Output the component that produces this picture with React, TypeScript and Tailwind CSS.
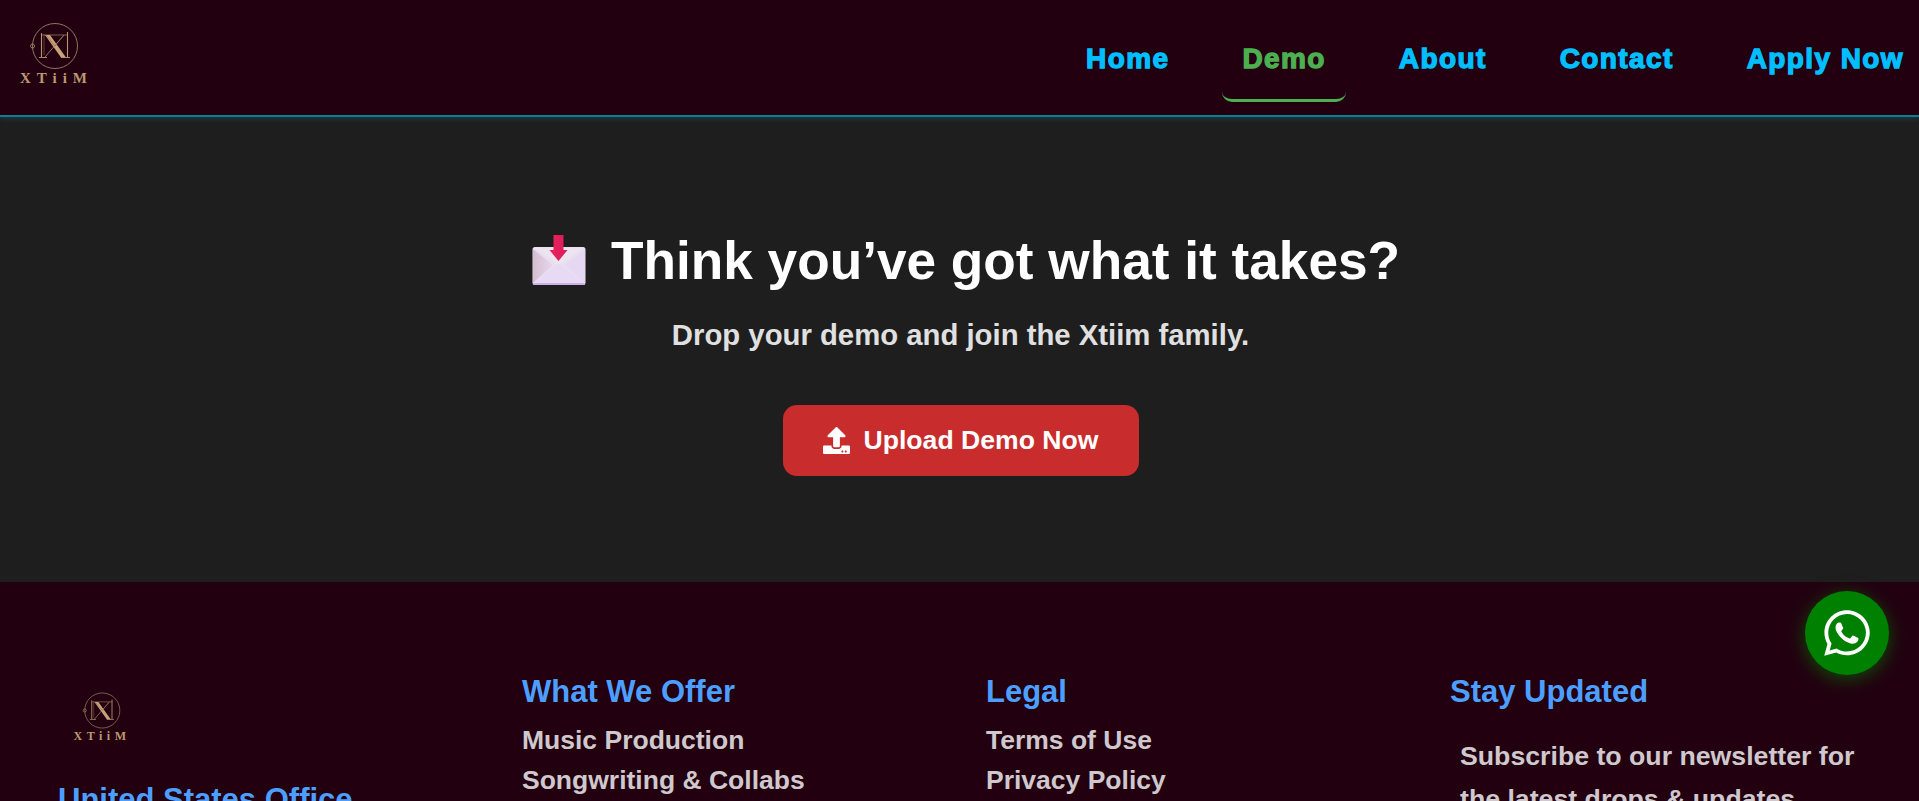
import { FaUpload, FaWhatsapp } from "react-icons/fa";

const navLinks = ["Home", "Demo", "About", "Contact", "Apply Now"];
const offers = ["Music Production", "Songwriting & Collabs"];
const legal = ["Terms of Use", "Privacy Policy"];

function Emblem({ className }: { className: string }) {
  return (
    <svg viewBox="0 0 50 50" className={className} fill="none">
      <circle cx="26" cy="25" r="22.5" stroke="#a08068" strokeWidth="0.9" />
      <circle cx="3.5" cy="25" r="2" stroke="#a08068" strokeWidth="0.9" />
      <path d="M13 14h26" stroke="#a88a6c" strokeWidth="0.7" />
      <path d="M12.5 12v24M38.5 11v25" stroke="#b8946e" strokeWidth="1.1" />
      <path d="M15 13v21" stroke="#8a6a4c" strokeWidth="0.6" />
      <path d="M16 14l16 22.5h5L21 14z" fill="#c9a27a" />
      <path d="M35 14L16 36" stroke="#b8946e" strokeWidth="0.8" />
      <path d="M17 14l9 11 9-11" stroke="#8a6a4c" strokeWidth="0.6" />
      <path d="M10 36.5h8M32 36.5h9" stroke="#b8946e" strokeWidth="0.9" />
    </svg>
  );
}

function EnvelopeIcon() {
  return (
    <svg viewBox="0 0 54 52" className="h-[52px] w-[54px] shrink-0">
      <defs>
        <linearGradient id="arrow" x1="0" y1="0" x2="1" y2="0">
          <stop offset="0" stopColor="#ee2158" />
          <stop offset="1" stopColor="#d81b60" />
        </linearGradient>
        <linearGradient id="side" x1="0" y1="0" x2="1" y2="0">
          <stop offset="0" stopColor="#d6bdd0" />
          <stop offset="1" stopColor="#e6d8ec" />
        </linearGradient>
      </defs>
      <rect x="0.5" y="12" width="53" height="38" rx="2.5" fill="#e9dff0" />
      <path d="M1 14v34l20-18z" fill="url(#side)" />
      <path d="M53 14v34l-20-18z" fill="#e6d8f2" />
      <path d="M2 12.5h50L30 28q-3 2-6 0z" fill="#ece4ee" />
      <path d="M2 48l23-18q2-1 4 0l23 18z" fill="#e8daf4" />
      <rect x="1" y="48" width="52" height="2" rx="1" fill="#cbaeea" />
      <path d="M21.5 0h10v15h4L26.5 26 17.5 15h4z" fill="url(#arrow)" />
    </svg>
  );
}

export default function App() {
  return (
    <div className="h-[801px] overflow-hidden bg-[#1e1e1e] font-['Liberation_Sans',Arial,sans-serif]">
      <header className="flex h-[117px] items-start justify-between border-b-2 border-[#137a92] bg-[#220010] pl-[19px] shadow-[0_2px_5px_rgba(0,180,220,0.2)]">
        <div className="flex w-[70px] flex-col items-center pt-[21px]">
          <Emblem className="h-[50px] w-[50px]" />
          <span className="ml-[5px] font-['Liberation_Serif',serif] text-[15px] leading-[14px] font-bold tracking-[6px] whitespace-nowrap text-[#bd9872]">
            XTiiM
          </span>
        </div>
        <nav className="mr-[-5px] flex items-start gap-[33px]">
          {navLinks.map((link) => (
            <a
              key={link}
              className={
                link === "Demo"
                  ? "flex h-[102px] items-start rounded-b-[10px] border-b-[3px] border-[#4caf50] px-[20px] pt-[43px] text-[28px] leading-[32px] font-bold tracking-[1.4px] whitespace-nowrap text-[#4caf50] [-webkit-text-stroke:1.3px_#4caf50]"
                  : "flex h-[102px] items-start px-[20px] pt-[43px] text-[28px] leading-[32px] font-bold tracking-[1.4px] whitespace-nowrap text-[#00bfff] [-webkit-text-stroke:1.3px_#00bfff]"
              }
            >
              {link}
            </a>
          ))}
        </nav>
      </header>

      <main className="flex h-[465px] flex-col items-center pt-[112px] text-center">
        <h1 className="flex items-center gap-[25px] pl-[13px] text-[53.2px] leading-[64px] font-bold text-white">
          <EnvelopeIcon />
          <span>Think you’ve got what it takes?</span>
        </h1>
        <p className="mt-[24px] ml-[2px] text-[29.3px] leading-[36px] font-bold text-[#e0e0e0]">
          Drop your demo and join the Xtiim family.
        </p>
        <button className="mt-[52px] ml-[2px] flex h-[71px] w-[356px] items-center justify-center gap-[14px] rounded-[14px] bg-[#c92c2c] text-[26.6px] font-bold text-white">
          <FaUpload className="h-[27px] w-[27px]" />
          Upload Demo Now
        </button>
      </main>

      <footer className="grid h-[300px] grid-cols-[repeat(4,464px)] bg-[#220010] pt-[93px] pl-[58px]">
        <div>
          <div className="ml-[-8px] flex w-[104px] flex-col items-center pt-[16px]">
            <Emblem className="ml-[-2px] h-[39px] w-[39px]" />
            <span className="font-['Liberation_Serif',serif] text-[12px] leading-[12px] font-bold tracking-[4.5px] whitespace-nowrap text-[#bd9872]">
              XTiiM
            </span>
          </div>
          <h3 className="mt-[41px] text-[31px] leading-[34px] font-bold text-[#4d9fff]">United States Office</h3>
        </div>
        <div>
          <h3 className="text-[31px] leading-[34px] font-bold text-[#4d9fff]">What We Offer</h3>
          <ul className="mt-[11px] flex flex-col">
            {offers.map((item) => (
              <li key={item} className="text-[26.5px] leading-[40px] font-bold text-[#cfc8cc]">{item}</li>
            ))}
          </ul>
        </div>
        <div>
          <h3 className="text-[31px] leading-[34px] font-bold text-[#4d9fff]">Legal</h3>
          <ul className="mt-[11px] flex flex-col">
            {legal.map((item) => (
              <li key={item} className="text-[26.5px] leading-[40px] font-bold text-[#cfc8cc]">{item}</li>
            ))}
          </ul>
        </div>
        <div>
          <h3 className="text-[31px] leading-[34px] font-bold text-[#4d9fff]">Stay Updated</h3>
          <p className="mt-[26px] pr-[50px] pl-[10px] text-[26.7px] leading-[43px] font-bold text-[#cfc8cc]">
            Subscribe to our newsletter for the latest drops &amp; updates.
          </p>
        </div>
      </footer>

      <a className="fixed top-[591px] left-[1805px] flex h-[84px] w-[84px] items-center justify-center rounded-full bg-[#008000] text-white shadow-[0_4px_18px_rgba(0,128,0,0.6)]">
        <FaWhatsapp className="h-[52px] w-[52px]" />
      </a>
    </div>
  );
}
